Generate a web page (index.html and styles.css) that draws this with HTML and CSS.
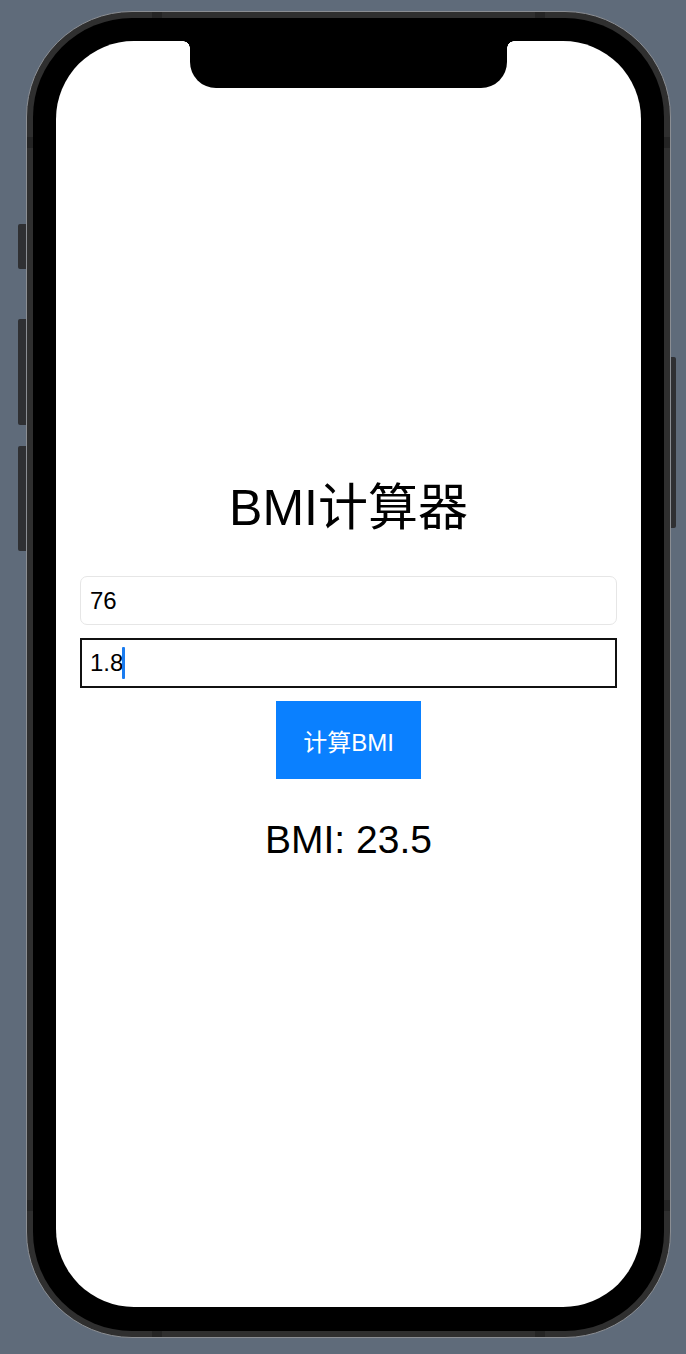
FILE: index.html
```html
<!DOCTYPE html>
<html lang="zh-CN">
<head>
    <meta charset="UTF-8">
    <meta name="viewport" content="width=device-width, initial-scale=1.0">
    <title>BMI计算器</title>
    <link rel="stylesheet" href="styles.css">
</head>
<body>
    <div class="phone">
        <!-- hardware buttons -->
        <span class="side-btn mute"></span>
        <span class="side-btn vol-up"></span>
        <span class="side-btn vol-down"></span>
        <span class="side-btn power"></span>

        <!-- antenna lines -->
        <span class="antenna top-left"></span>
        <span class="antenna top-right"></span>
        <span class="antenna bottom-left"></span>
        <span class="antenna bottom-right"></span>
        <span class="antenna side left-top"></span>
        <span class="antenna side left-bottom"></span>
        <span class="antenna side right-top"></span>
        <span class="antenna side right-bottom"></span>

        <div class="bezel">
            <div class="screen">
                <div class="notch"></div>

                <main class="app">
                    <h1 class="title">BMI计算器</h1>
                    <div class="field">76</div>
                    <div class="field focused">1.8<span class="caret"></span></div>
                    <button class="calc-btn">计算BMI</button>
                    <p class="result">BMI: 23.5</p>
                </main>
            </div>
        </div>
    </div>
</body>
</html>
```

FILE: styles.css
```css
* {
    box-sizing: border-box;
}
body {
    margin: 0;
    background-color: #5f6b7a;
    font-family: "Liberation Sans", "Noto Sans CJK SC", sans-serif;
}
.phone {
    position: relative;
    width: 645px;
    height: 1327px;
    margin: 11px 0 0 26px;
    padding: 6px;
    background-color: #2f2f2f;
    border: 1px solid #8b8e93;
    border-radius: 106px;
}
.side-btn {
    position: absolute;
    background-color: #2f3033;
}
.mute, .vol-up, .vol-down {
    left: -9px;
    width: 8px;
    border-radius: 2px 0 0 2px;
}
.mute {
    top: 212px;
    height: 45px;
}
.vol-up {
    top: 307px;
    height: 106px;
}
.vol-down {
    top: 434px;
    height: 105px;
}
.power {
    right: -6px;
    top: 345px;
    width: 5px;
    height: 171px;
    border-radius: 0 2px 2px 0;
}
.antenna {
    position: absolute;
    width: 10px;
    height: 6px;
    background-color: #242424;
}
.top-left { top: 0; left: 125px; }
.top-right { top: 0; left: 508px; }
.bottom-left { bottom: 0; left: 125px; }
.bottom-right { bottom: 0; left: 508px; }
.antenna.side {
    width: 6px;
    height: 11px;
}
.left-top { left: 0; top: 125px; }
.left-bottom { left: 0; top: 1188px; }
.right-top { right: 0; top: 125px; }
.right-bottom { right: 0; top: 1188px; }
.bezel {
    height: 100%;
    padding: 23px 23px 24px 23px;
    background-color: #000;
    border-radius: 99px;
}
.screen {
    position: relative;
    height: 100%;
    overflow: hidden;
    background-color: #fff;
    border-radius: 78px;
}
.notch {
    position: absolute;
    top: 0;
    left: 134px;
    width: 317px;
    height: 47px;
    background-color: #000;
    border-radius: 0 0 26px 26px;
}
.notch::before, .notch::after {
    content: "";
    position: absolute;
    top: 0;
    width: 7px;
    height: 7px;
}
.notch::before {
    left: -7px;
    background: radial-gradient(circle at 0 100%, transparent 6.5px, #000 7px);
}
.notch::after {
    right: -7px;
    background: radial-gradient(circle at 100% 100%, transparent 6.5px, #000 7px);
}
.app {
    display: flex;
    flex-direction: column;
    padding: 437px 24px 0 24px;
}
.title {
    margin: 0;
    font-size: 50px;
    line-height: 60px;
    font-weight: normal;
    text-align: center;
    color: #000;
}
.field {
    display: flex;
    align-items: center;
    height: 49px;
    margin-top: 38px;
    padding-left: 9px;
    font-size: 24px;
    color: #000;
    border: 1px solid #e6e6e6;
    border-radius: 7px;
}
.field.focused {
    height: 50px;
    margin-top: 13px;
    padding-left: 8px;
    border: 2px solid #111;
    border-radius: 0;
}
.caret {
    width: 3px;
    height: 32px;
    margin-left: -1px;
    background-color: #1a7cf0;
    border-radius: 1px;
}
.calc-btn {
    align-self: center;
    width: 145px;
    height: 78px;
    margin-top: 13px;
    padding: 0;
    font-family: inherit;
    font-size: 24px;
    color: #fff;
    background-color: #0a80ff;
    border: none;
    border-radius: 0;
}
.result {
    margin: 38px 0 0 0;
    font-size: 39px;
    line-height: 46px;
    text-align: center;
    color: #000;
}
```
